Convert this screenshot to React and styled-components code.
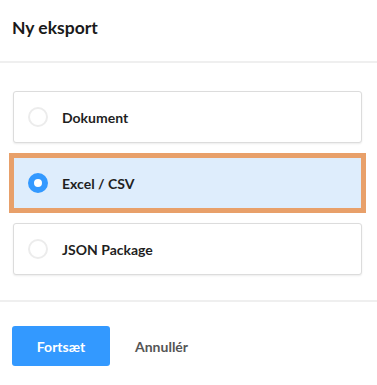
import React, { useState } from 'react';
import styled, { createGlobalStyle } from 'styled-components';

const GlobalStyle = createGlobalStyle`
  body {
    margin: 0;
    background: #ffffff;
    font-family: Lato, "Open Sans", "Liberation Sans", sans-serif;
    color: #1a1a1a;
  }
`;

const options = [
  { id: 'doc', label: 'Dokument' },
  { id: 'csv', label: 'Excel / CSV' },
  { id: 'json', label: 'JSON Package' }
];

const App = () => {
  const [selected, setSelected] = useState('csv');

  return (
    <>
      <GlobalStyle />
      <Dialog>
        <Header>
          <Title>Ny eksport</Title>
        </Header>
        <Body>
          {options.map((opt) => (
            <OptionCard
              key={opt.id}
              $active={selected === opt.id}
              onClick={() => setSelected(opt.id)}
            >
              <Radio $active={selected === opt.id} />
              <OptionLabel>{opt.label}</OptionLabel>
            </OptionCard>
          ))}
        </Body>
        <Footer>
          <PrimaryButton>Fortsæt</PrimaryButton>
          <TextButton>Annullér</TextButton>
        </Footer>
      </Dialog>
    </>
  );
};

export default App;

const Dialog = styled.div`
  width: 377px;
  display: flex;
  flex-direction: column;
`;

const Header = styled.div`
  height: 63px;
  display: flex;
  align-items: center;
  padding: 0 12px;
  border-bottom: 2px solid #efefef;
  box-sizing: border-box;
`;

const Title = styled.h1`
  margin: 0 0 6px;
  font-size: 17.5px;
  font-weight: 700;
  color: #1a1a1a;
`;

const Body = styled.div`
  display: flex;
  flex-direction: column;
  gap: 14px;
  padding: 28px 15px 25px 13px;
  border-bottom: 2px solid #efefef;
`;

const OptionCard = styled.div`
  height: 52px;
  box-sizing: border-box;
  display: flex;
  align-items: center;
  gap: 14px;
  padding: 0 14px;
  border-radius: ${(p) => (p.$active ? '0' : '3px')};
  cursor: pointer;
  background: ${(p) => (p.$active ? '#deedfc' : '#ffffff')};
  border: 1px solid ${(p) => (p.$active ? '#8cc4fb' : '#dcdcdc')};
  box-shadow: 0 1px 2px rgba(0, 0, 0, 0.08);
  outline: ${(p) => (p.$active ? '5px solid #e8a06a' : 'none')};
  outline-offset: -1px;
`;

const Radio = styled.span`
  width: 20px;
  height: 20px;
  box-sizing: border-box;
  border-radius: 50%;
  flex-shrink: 0;
  background: #ffffff;
  border: ${(p) => (p.$active ? '6px solid #3399ff' : '2px solid #ececec')};
`;

const OptionLabel = styled.span`
  font-size: 14px;
  font-weight: 700;
  color: #1f1f1f;
`;

const Footer = styled.div`
  display: flex;
  align-items: center;
  gap: 25px;
  padding: 24px 12px;
`;

const PrimaryButton = styled.button`
  width: 98px;
  height: 40px;
  border: none;
  border-radius: 3px;
  background: #3399ff;
  color: #ffffff;
  font-family: inherit;
  font-size: 14px;
  font-weight: 700;
  cursor: pointer;
`;

const TextButton = styled.button`
  background: none;
  border: none;
  padding: 0;
  color: #555555;
  font-family: inherit;
  font-size: 14px;
  font-weight: 700;
  cursor: pointer;
`;
